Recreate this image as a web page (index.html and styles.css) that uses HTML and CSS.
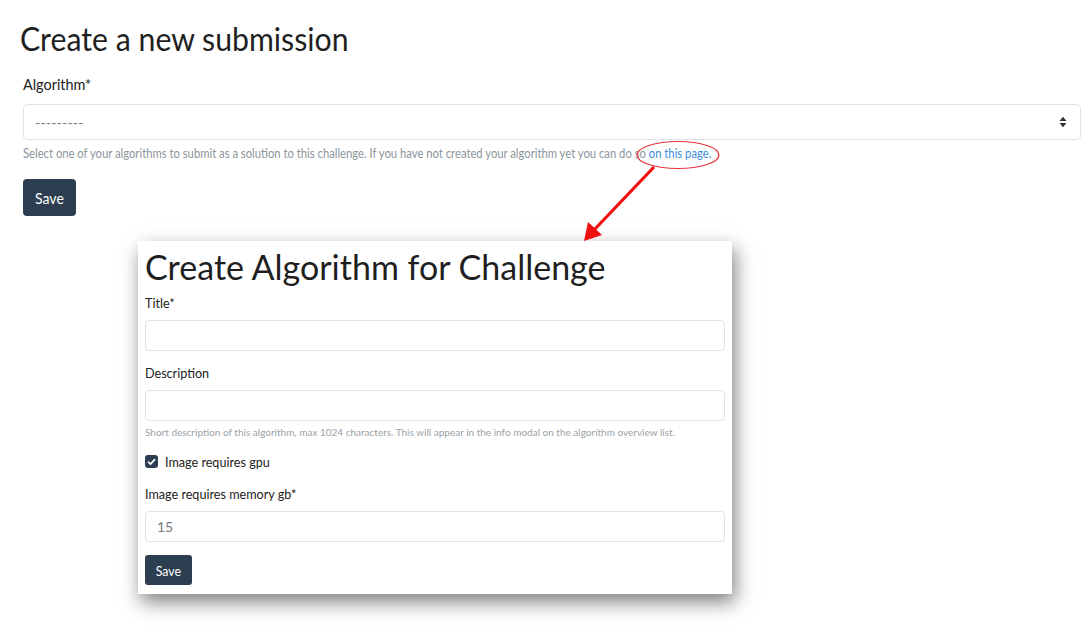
FILE: index.html
```html
<!DOCTYPE html>
<html>
<head>
<meta charset="utf-8">
<link rel="stylesheet" href="styles.css">
</head>
<body>
<div class="page">
  <section class="main">
    <h1 class="title"><span class="nx">Create a new submission</span></h1>
    <div class="group">
      <label class="label"><span class="nx">Algorithm*</span></label>
      <div class="select">
        <span class="placeholder">---------</span>
        <svg class="caret" width="8" height="12" viewBox="0 0 8 12"><path d="M0.5 5 L4 0.8 L7.5 5 Z M0.5 7 L4 11.2 L7.5 7 Z" fill="#333"/></svg>
      </div>
      <p class="help"><span class="nx">Select one of your algorithms to submit as a solution to this challenge. If you have not created your algorithm yet you can do so <a class="link" href="#">on this page.</a></span></p>
    </div>
    <button class="btn"><span class="nx-c">Save</span></button>
  </section>

  <div class="card">
    <h2 class="card-title">Create Algorithm for Challenge</h2>
    <label class="c-label"><span class="nx">Title*</span></label>
    <div class="c-input"></div>
    <label class="c-label c-gap"><span class="nx">Description</span></label>
    <div class="c-input"></div>
    <p class="c-help">Short description of this algorithm, max 1024 characters. This will appear in the info modal on the algorithm overview list.</p>
    <div class="check-row">
      <span class="checkbox"><svg width="9" height="8" viewBox="0 0 9 8"><path d="M1.4 4.2 L3.5 6.1 L7.6 1.6" fill="none" stroke="#fff" stroke-width="1.7" stroke-linecap="round" stroke-linejoin="round"/></svg></span>
      <span class="check-label"><span class="nx">Image requires gpu</span></span>
    </div>
    <label class="c-label c-gap2"><span class="nx">Image requires memory gb*</span></label>
    <div class="c-input"><span class="c-value">15</span></div>
    <button class="c-btn"><span class="nx-c">Save</span></button>
  </div>

  <svg class="annot" width="1089" height="628" viewBox="0 0 1089 628">
    <ellipse cx="678" cy="155" rx="41" ry="13.5" fill="none" stroke="#e8333a" stroke-width="1.2"/>
    <line x1="654" y1="167" x2="594" y2="230" stroke="#f01010" stroke-width="3.2"/>
    <polygon points="584,241 588,222 602,235" fill="#f01010"/>
  </svg>
</div>
</body>
</html>
```
FILE: styles.css
```css
* { box-sizing: border-box; }
html, body { margin: 0; padding: 0; background: #fff; }
body { font-family: Lato, "Open Sans", sans-serif; color: #222; }
.page { position: relative; width: 1089px; height: 628px; overflow: hidden; }
.nx { display: inline-block; transform: scaleX(0.9); transform-origin: left center; white-space: nowrap; }
.nx-c { display: inline-block; transform: scaleX(0.88); transform-origin: center; }
.main { padding: 20px 8px 0 23px; }
.title { font-size: 32px; font-weight: 400; margin: 0 0 0 -3px; line-height: 38px; color: #1f1f1f; }
.title .nx { transform: scaleX(0.945); }
.group { margin-top: 16px; }
.label { display: block; font-size: 16px; line-height: 20px; color: #222; }
.select { margin-top: 10px; height: 36px; width: 1058px; border: 1px solid #dfe3e8; border-radius: 4px; display: flex; align-items: center; justify-content: space-between; padding: 0 12px 0 11px; }
.placeholder { font-size: 14px; color: #7a7a7a; letter-spacing: 0.2px; }
.caret { margin-right: 1px; }
.help { margin: 6px 0 0 0; font-size: 12.5px; line-height: 16px; color: #8c969d; white-space: nowrap; }
.link { color: #3b8ed8; text-decoration: none; }
.btn { margin-top: 17px; background: #2c3e50; color: #fff; border: none; border-radius: 4px; font-family: Lato, sans-serif; font-size: 16px; height: 37px; width: 53px; padding: 0; }
.card { position: absolute; left: 138px; top: 241px; width: 594px; height: 353px; background: #fff; box-shadow: 3px 8px 18px rgba(0,0,0,0.5); padding: 6px 7px 0 7px; }
.card-title { font-size: 34px; font-weight: 400; margin: 0; line-height: 40px; color: #1f1f1f; }
.c-label { display: block; font-size: 14px; line-height: 18px; margin-top: 7px; color: #222; }
.c-gap { margin-top: 13px; }
.c-gap2 { margin-top: 15px; }
.c-input { margin-top: 8px; height: 31px; width: 580px; border: 1px solid #dfe3e8; border-radius: 4px; display: flex; align-items: center; padding-left: 11px; }
.c-value { font-size: 14px; color: #7a7a7a; }
.c-help { margin: 5px 0 0 0; font-size: 10px; line-height: 12px; color: #9aa2a8; white-space: nowrap; }
.check-row { display: flex; align-items: center; margin-top: 15px; }
.checkbox { width: 13px; height: 13px; background: #2c3e50; border-radius: 3px; display: flex; align-items: center; justify-content: center; }
.check-label { font-size: 14px; margin-left: 7px; color: #222; }
.c-btn { display: block; margin-top: 13px; background: #2c3e50; color: #fff; border: none; border-radius: 3px; font-family: Lato, sans-serif; font-size: 14px; height: 30px; width: 47px; padding: 0; }
.annot { position: absolute; left: 0; top: 0; pointer-events: none; }
```
